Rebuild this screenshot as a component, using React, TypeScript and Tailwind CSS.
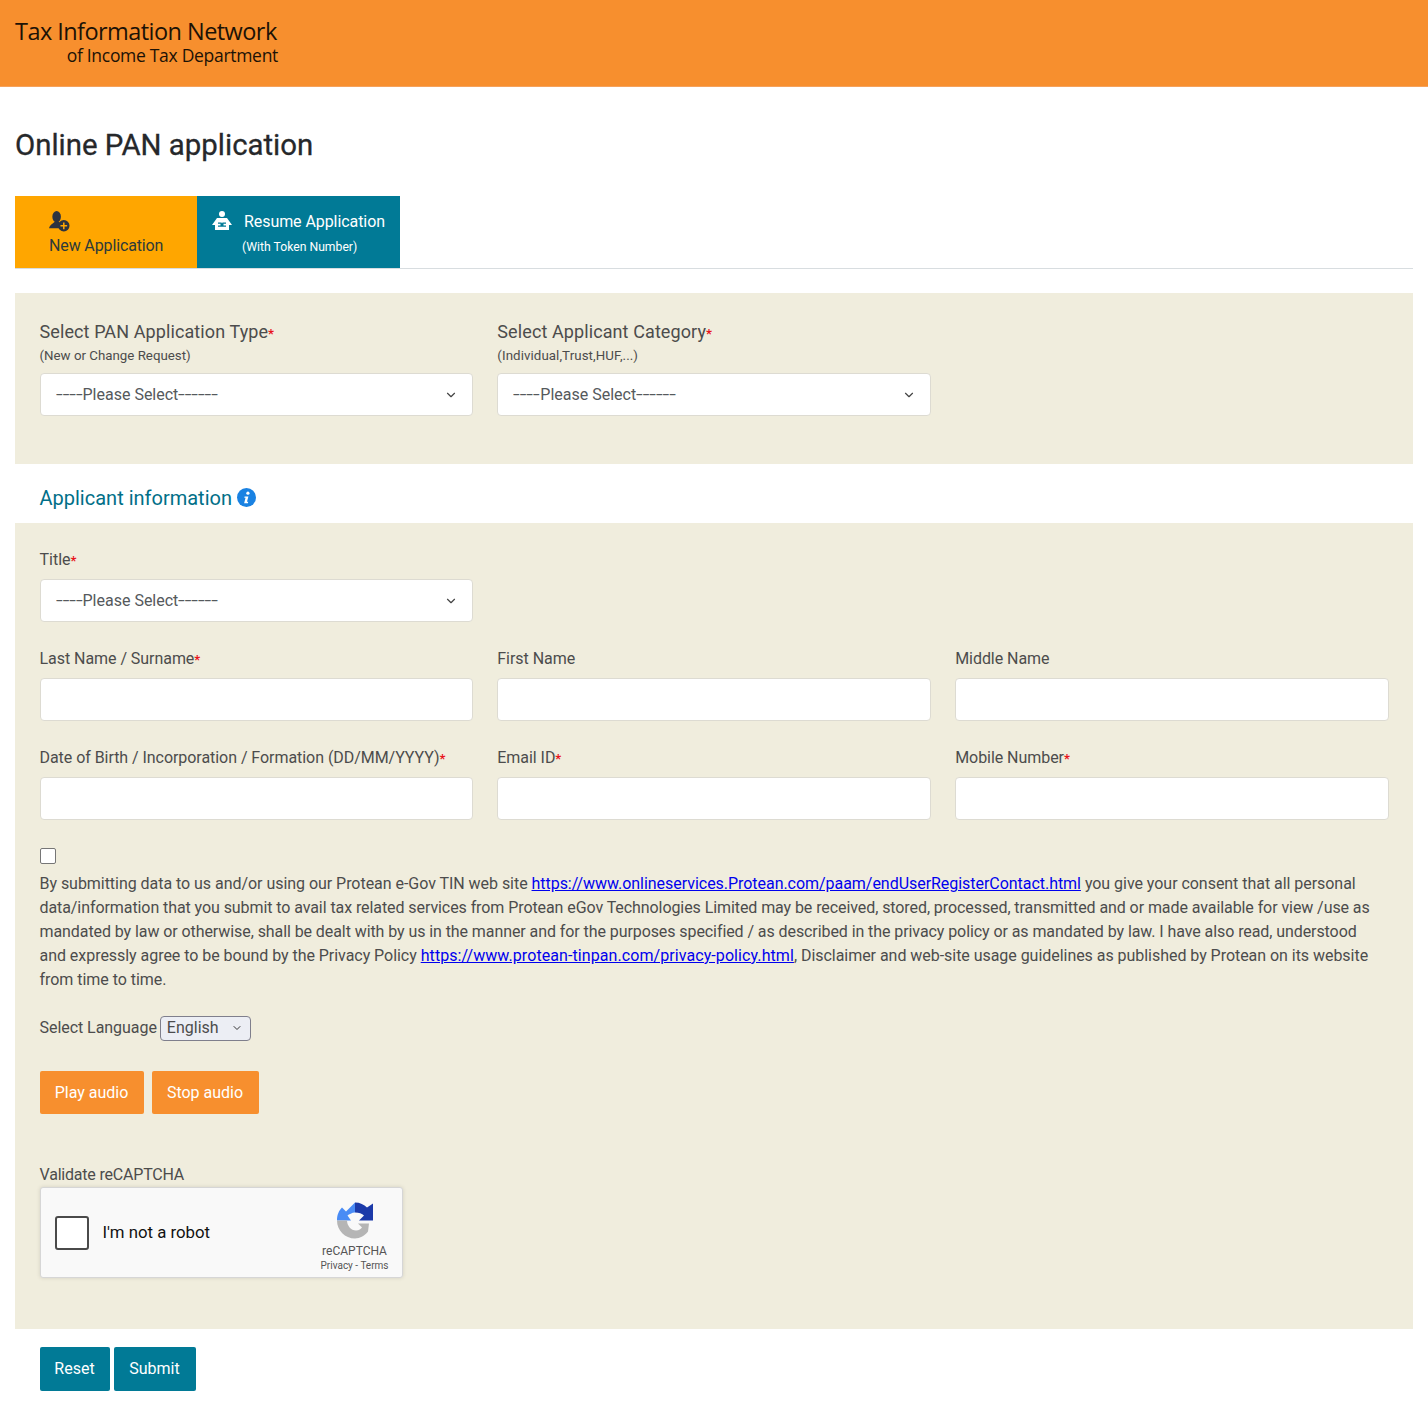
import { ChevronDown } from 'lucide-react'

function Req() {
  return <span className="text-[#e8141c] text-[13px] font-bold">*</span>
}

function SelectBox() {
  return (
    <div className="h-[43px] bg-white border border-[#dddbd2] rounded-[4px] flex items-center justify-between pl-[15px] pr-[14px] text-[16px] text-[#55595c]">
      <span>
        <span className="inline-block w-[27px] origin-left scale-x-150">----</span>Please Select<span className="inline-block w-[41px] origin-left scale-x-150">------</span>
      </span>
      <ChevronDown className="w-[14px] h-[14px] text-[#444]" strokeWidth={2} />
    </div>
  )
}

function InputBox() {
  return <div className="h-[43px] bg-white border border-[#dddbd2] rounded-[4px]" />
}

function Field({ label, req }: { label: string; req?: boolean }) {
  return (
    <div>
      <div className="h-[24px] mb-[7px] flex items-center text-[16px] text-[#4c4c4c] tracking-[-0.05px] whitespace-nowrap">
        <span>
          {label}
          {req && <Req />}
        </span>
      </div>
      <InputBox />
    </div>
  )
}

function RecaptchaLogo() {
  return (
    <svg viewBox="0 0 36 36" className="w-[36px] h-[37px]">
      <path d="M0 18 C0 12 2 8 5 5 L9 9 L18 0 L18 10 C15 10 12 12 10.500 13 L14 18z" fill="#4a8cf5" />
      <path d="M18 0 C23 0 27 2 30 5 L36 1 L36 18 L22 18 L27 13 C25 11 22 10 18 10z" fill="#1c3aa9" />
      <path d="M0 18 H10 C10 23 14 28 19 28 C22 28 24 26 25 25 L21 21 H32 L31 29 C28 33 23 36 18 36 C8 36 0 28 0 18z" fill="#b5b5b5" />
    </svg>
  )
}

export default function App() {
  const bodyFont = "font-['Roboto',sans-serif]"

  return (
    <div className={`min-h-[1417px] bg-white ${bodyFont}`}>
      {/* Header */}
      <div className="h-[87px] bg-[#f78f2e] border-b border-[#f5a25c] pl-[15px] pt-[17px]">
        <div className="w-[263px] font-['Open_Sans',sans-serif] font-medium text-[#1c1206] leading-none">
          <div className="text-[23.500px] tracking-[-0.55px] h-[30px] flex items-center whitespace-nowrap">Tax Information Network</div>
          <div className="text-[17.500px] tracking-[-0.3px] h-[18px] flex items-center justify-end whitespace-nowrap">of Income Tax Department</div>
        </div>
      </div>

      <div className="px-[15px]">
        <h1 className="pt-[39px] h-[109px] text-[29.400px] leading-[38px] font-normal text-[#26282b] [-webkit-text-stroke:0.3px_#26282b]">Online PAN application</h1>

        {/* Tabs */}
        <div className="flex border-b border-[#d8dde0] h-[73px]">
          <div className="w-[182px] h-[72px] bg-[#ffa600] pl-[34px] pt-[15px] text-[16px] text-[#2d3a3a] tracking-[-0.13px]">
            <svg viewBox="0 0 22 22" className="w-[21px] h-[21px]" fill="#2c3340">
              <ellipse cx="8" cy="6" rx="4.500" ry="6" />
              <path d="M0 18 C1 14 5 13 6 11 L10 11 C11 12 12 13 12 14 C11 15 10.500 17 11 18z" />
              <circle cx="15.500" cy="15.500" r="6" />
              <path d="M14.700 12h1.600v2.700H19v1.600h-2.700V19h-1.600v-2.700H12v-1.600h2.700z" fill="#ffa600" />
            </svg>
            <div className="mt-[2px] leading-[24px]">New Application</div>
          </div>
          <div className="w-[203px] h-[72px] bg-[#017a96] text-white flex pl-[15px] pt-[14px]">
            <svg viewBox="0 0 20 20" className="w-[20px] h-[21px] shrink-0" fill="#fff">
              <circle cx="10" cy="3.500" r="3" />
              <path d="M5 7.500h10l5 7h-3v5H3v-5H0z" />
              <path d="M6 12h3.500l.5 1 .5-1H14v1.200h-2.500v1.800H14v1.200H6V15h2.500v-1.800H6z" fill="#017a96" />
            </svg>
            <div className="ml-[12px] flex flex-col">
              <span className="text-[16px] leading-[24px] tracking-[-0.07px] whitespace-nowrap">Resume Application</span>
              <span className="text-[12.200px] leading-[24px] whitespace-nowrap -ml-[2px] mt-[1px]">(With Token Number)</span>
            </div>
          </div>
        </div>

        {/* Type and category */}
        <div className="mt-[24px] h-[171px] bg-[#f0eddd] px-[24.500px] pt-[27px]">
          <div className="grid grid-cols-3 gap-x-[24.500px]">
            <div>
              <div className="h-[24px] text-[18px] leading-[24px] text-[#4c4c4c] tracking-[0.1px] whitespace-nowrap">
                Select PAN Application Type<Req />
              </div>
              <div className="h-[24px] text-[13.300px] leading-[24px] text-[#4c4c4c]">(New or Change Request)</div>
              <div className="mt-[5px]"><SelectBox /></div>
            </div>
            <div>
              <div className="h-[24px] text-[18px] leading-[24px] text-[#4c4c4c] tracking-[0.1px] whitespace-nowrap">
                Select Applicant Category<Req />
              </div>
              <div className="h-[24px] text-[13.300px] leading-[24px] text-[#4c4c4c] tracking-[0.08px]">(Individual,Trust,HUF,...)</div>
              <div className="mt-[5px]"><SelectBox /></div>
            </div>
          </div>
        </div>

        {/* Applicant information */}
        <div className="h-[59px] pl-[24.500px] pt-[8px] flex items-center gap-[5px] text-[20px] text-[#016f88]">
          <span>Applicant information</span>
          <svg viewBox="0 0 20 20" className="w-[19px] h-[19px]">
            <circle cx="10" cy="10" r="10" fill="#1a82e2" />
            <circle cx="11.500" cy="5.500" r="1.700" fill="#fff" />
            <path d="M8 9h4l-1.500 5.500h1.300l-.3 1.500H7.500L9 10.300H7.700z" fill="#fff" />
          </svg>
        </div>

        <div className="h-[806px] bg-[#f0eddd] px-[24.500px] pt-[25px]">
          <div className="grid grid-cols-3 gap-x-[24.500px] gap-y-[25px]">
            <div className="col-span-3 w-[calc((100%-49px)/3)]">
              <div className="h-[24px] mb-[7px] text-[16px] leading-[24px] text-[#4c4c4c]">Title<Req /></div>
              <SelectBox />
            </div>
            <Field label="Last Name / Surname" req />
            <Field label="First Name" />
            <Field label="Middle Name" />
            <Field label="Date of Birth / Incorporation / Formation (DD/MM/YYYY)" req />
            <Field label="Email ID" req />
            <Field label="Mobile Number" req />
          </div>

          {/* Consent */}
          <div className="mt-[28px] w-[16px] h-[16px] bg-white border border-[#767676] rounded-[2px]" />
          <p className="mt-[8px] pr-[4px] text-[16px] leading-[24px] text-[#4c4c4c] tracking-[-0.04px]">
            By submitting data to us and/or using our Protean e-Gov TIN web site{' '}
            <a className="text-[#0000ee] underline" href="#">https://www.onlineservices.Protean.com/paam/endUserRegisterContact.html</a>{' '}
            you give your consent that all personal{' '}
            <span className="tracking-[-0.08px]">
              data/information that you submit to avail tax related services from Protean eGov Technologies Limited may be received, stored, processed, transmitted and or made available for view /use as mandated by law or otherwise, shall be dealt with by us in the manner and for the purposes specified / as described in the privacy policy or as mandated by law. I have also read, understood
            </span>{' '}
            and expressly agree to be bound by the Privacy Policy{' '}
            <a className="text-[#0000ee] underline tracking-[0.08px]" href="#">https://www.protean-tinpan.com/privacy-policy.html</a>
            , Disclaimer and web-site usage guidelines as published by Protean on its website from time to time.
          </p>

          {/* Language */}
          <div className="mt-[24px] flex items-center gap-[3px] text-[16px] text-[#4c4c4c] h-[24px]">
            <span className="tracking-[-0.05px]">Select Language</span>
            <div className="w-[91px] h-[25px] bg-[#eceef4] border border-[#7f7f8c] rounded-[4px] flex items-center justify-between pl-[6px] pr-[7px]">
              <span>English</span>
              <ChevronDown className="w-[12px] h-[12px] text-[#333]" strokeWidth={2} />
            </div>
          </div>

          <div className="mt-[31px] flex gap-[8px]">
            <button className="h-[43px] w-[104px] bg-[#f78f2e] rounded-[2px] text-white text-[16px]">Play audio</button>
            <button className="h-[43px] w-[107px] bg-[#f78f2e] rounded-[2px] text-white text-[16px]">Stop audio</button>
          </div>

          <div className="mt-[49px] h-[24px] text-[16px] leading-[24px] text-[#4c4c4c] tracking-[-0.2px]">Validate reCAPTCHA</div>
          <div className="w-[363px] h-[91px] bg-[#f9f9f9] border border-[#d6d6d6] rounded-[3px] shadow-[0_0_4px_rgba(0,0,0,0.12)] flex items-center justify-between pl-[14px] pr-[13px]">
            <div className="flex items-center">
              <div className="w-[34px] h-[34px] bg-white border-2 border-[#4a4a4a] rounded-[3px]" />
              <span className="ml-[14px] text-[16.800px] text-[#111]">I'm not a robot</span>
            </div>
            <div className="flex flex-col items-center text-[#555] pt-[10px]">
              <RecaptchaLogo />
              <span className="mt-[5px] text-[12px] leading-[14px]">reCAPTCHA</span>
              <span className="text-[10px] leading-[15px] whitespace-nowrap">Privacy - Terms</span>
            </div>
          </div>
        </div>

        {/* Actions */}
        <div className="mt-[18px] pl-[24.500px] flex gap-[4px]">
          <button className="h-[44px] w-[70px] bg-[#017a96] rounded-[2px] text-white text-[16px]">Reset</button>
          <button className="h-[44px] w-[82px] bg-[#017a96] rounded-[2px] text-white text-[16px]">Submit</button>
        </div>
      </div>
    </div>
  )
}
